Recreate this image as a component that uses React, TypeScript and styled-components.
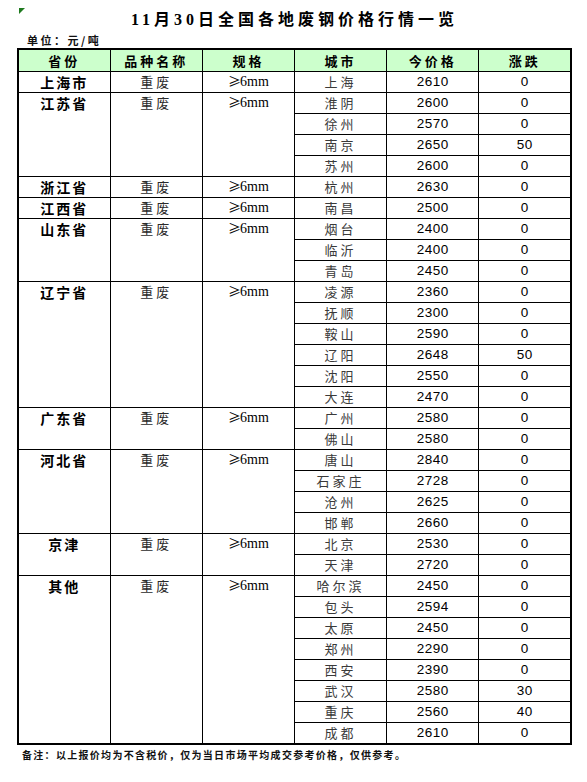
import React from 'react';
import styled, { createGlobalStyle } from 'styled-components';

const GlobalStyle = createGlobalStyle`
  html, body {
    margin: 0;
    padding: 0;
    background: #ffffff;
  }
  body {
    font-family: "Noto Sans CJK SC", "Liberation Sans", sans-serif;
    color: #000;
  }
`;

const Sheet = styled.div`
  position: relative;
  width: 587px;
  height: 782px;
  padding: 8px 0 0 17px;
  box-sizing: border-box;
`;

const CornerMark = styled.div`
  position: absolute;
  left: 19px;
  top: 8px;
  width: 0;
  height: 0;
  border-top: 6px solid #1e7a1e;
  border-right: 6px solid transparent;
`;

const Title = styled.h1`
  margin: 0;
  width: 555px;
  height: 24px;
  line-height: 24px;
  text-align: center;
  font-family: "Liberation Serif", "Noto Sans CJK SC", serif;
  font-size: 16px;
  font-weight: 700;
  letter-spacing: 4px;
`;

const Unit = styled.div`
  height: 16px;
  line-height: 16px;
  padding-left: 10px;
  font-size: 11px;
  font-weight: 700;
  letter-spacing: 2.5px;
  color: #111;
`;

const Table = styled.table`
  width: 555px;
  border-collapse: collapse;
  table-layout: fixed;
  border: 2px solid #000;
`;

const HeadCell = styled.th`
  height: 21px;
  padding: 0;
  background: #ccffcc;
  border: 1px solid #000;
  font-size: 13px;
  font-weight: 700;
  letter-spacing: 3px;
  text-align: center;
  line-height: 20px;
`;

type Kind = 'province' | 'text' | 'spec' | 'city' | 'num';

const fontFor = (k?: Kind) =>
  k === 'num'
    ? '"Liberation Sans", sans-serif'
    : k === 'spec'
    ? '"Liberation Serif", serif'
    : '"Noto Sans CJK SC", sans-serif';

const spacingFor = (k?: Kind) =>
  k === 'province' ? '2px' : k === 'num' ? '0.5px' : k === 'spec' ? '0' : '3px';

const sizeFor = (k?: Kind) =>
  k === 'province' || k === 'spec' ? '14px' : k === 'num' ? '13.5px' : '13px';

const Cell = styled.td<{ $kind?: Kind }>`
  height: 20px;
  padding: 0;
  border: 1px solid #000;
  text-align: center;
  line-height: 20px;
  vertical-align: ${p => (p.$kind === 'province' || p.$kind === 'text' || p.$kind === 'spec' ? 'top' : 'middle')};
  font-size: ${p => sizeFor(p.$kind)};
  font-weight: ${p => (p.$kind === 'province' ? 700 : 400)};
  letter-spacing: ${p => spacingFor(p.$kind)};
  font-family: ${p => fontFor(p.$kind)};
  color: ${p => (p.$kind === 'city' ? '#3a3a3a' : p.$kind === 'text' ? '#2a2a2a' : '#000')};
`;

const Ge = styled.span`
  font-family: "Noto Sans CJK SC", sans-serif;
  font-size: 13px;
  line-height: 0;
  letter-spacing: -1px;
`;

const Note = styled.div`
  padding: 3px 0 0 5px;
  line-height: 14px;
  font-size: 10px;
  font-weight: 700;
  letter-spacing: 1.3px;
  color: #111;
`;

type City = [string, number, number];

const groups: { province: string; cities: City[] }[] = [
  { province: '上海市', cities: [['上海', 2610, 0]] },
  {
    province: '江苏省',
    cities: [
      ['淮阴', 2600, 0],
      ['徐州', 2570, 0],
      ['南京', 2650, 50],
      ['苏州', 2600, 0],
    ],
  },
  { province: '浙江省', cities: [['杭州', 2630, 0]] },
  { province: '江西省', cities: [['南昌', 2500, 0]] },
  {
    province: '山东省',
    cities: [
      ['烟台', 2400, 0],
      ['临沂', 2400, 0],
      ['青岛', 2450, 0],
    ],
  },
  {
    province: '辽宁省',
    cities: [
      ['凌源', 2360, 0],
      ['抚顺', 2300, 0],
      ['鞍山', 2590, 0],
      ['辽阳', 2648, 50],
      ['沈阳', 2550, 0],
      ['大连', 2470, 0],
    ],
  },
  {
    province: '广东省',
    cities: [
      ['广州', 2580, 0],
      ['佛山', 2580, 0],
    ],
  },
  {
    province: '河北省',
    cities: [
      ['唐山', 2840, 0],
      ['石家庄', 2728, 0],
      ['沧州', 2625, 0],
      ['邯郸', 2660, 0],
    ],
  },
  {
    province: '京津',
    cities: [
      ['北京', 2530, 0],
      ['天津', 2720, 0],
    ],
  },
  {
    province: '其他',
    cities: [
      ['哈尔滨', 2450, 0],
      ['包头', 2594, 0],
      ['太原', 2450, 0],
      ['郑州', 2290, 0],
      ['西安', 2390, 0],
      ['武汉', 2580, 30],
      ['重庆', 2560, 40],
      ['成都', 2610, 0],
    ],
  },
];

const headers = ['省份', '品种名称', '规格', '城市', '今价格', '涨跌'];

const App: React.FC = () => {
  return (
    <Sheet>
      <GlobalStyle />
      <CornerMark />
      <Title>11月30日全国各地废钢价格行情一览</Title>
      <Unit>单位：元/吨</Unit>
      <Table>
        <thead>
          <tr>
            {headers.map(h => (
              <HeadCell key={h}>{h}</HeadCell>
            ))}
          </tr>
        </thead>
        <tbody>
          {groups.map(group =>
            group.cities.map(([city, price, change], i) => (
              <tr key={city}>
                {i === 0 && (
                  <>
                    <Cell $kind="province" rowSpan={group.cities.length}>
                      {group.province}
                    </Cell>
                    <Cell $kind="text" rowSpan={group.cities.length}>
                      重废
                    </Cell>
                    <Cell $kind="spec" rowSpan={group.cities.length}>
                      <Ge>≥</Ge>6mm
                    </Cell>
                  </>
                )}
                <Cell $kind="city">{city}</Cell>
                <Cell $kind="num">{price}</Cell>
                <Cell $kind="num">{change}</Cell>
              </tr>
            ))
          )}
        </tbody>
      </Table>
      <Note>备注：以上报价均为不含税价，仅为当日市场平均成交参考价格，仅供参考。</Note>
    </Sheet>
  );
};

export default App;
